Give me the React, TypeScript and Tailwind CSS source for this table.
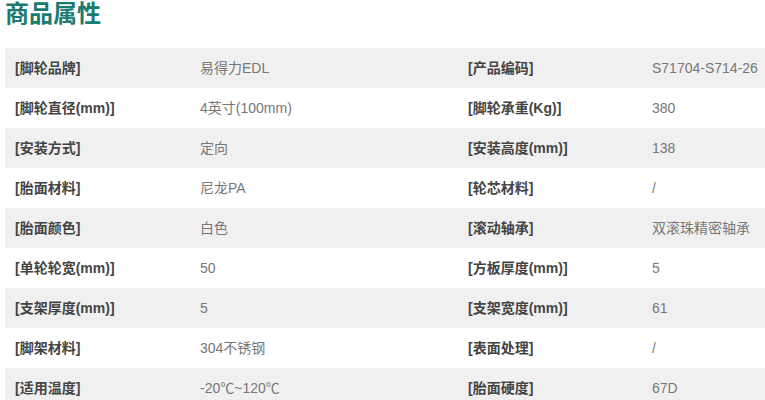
import React from "react";

const rows: [string, string, string, string][] = [
  ["[脚轮品牌]", "易得力EDL", "[产品编码]", "S71704-S714-26"],
  ["[脚轮直径(mm)]", "4英寸(100mm)", "[脚轮承重(Kg)]", "380"],
  ["[安装方式]", "定向", "[安装高度(mm)]", "138"],
  ["[胎面材料]", "尼龙PA", "[轮芯材料]", "/"],
  ["[胎面颜色]", "白色", "[滚动轴承]", "双滚珠精密轴承"],
  ["[单轮轮宽(mm)]", "50", "[方板厚度(mm)]", "5"],
  ["[支架厚度(mm)]", "5", "[支架宽度(mm)]", "61"],
  ["[脚架材料]", "304不锈钢", "[表面处理]", "/"],
  ["[适用温度]", "-20℃~120℃", "[胎面硬度]", "67D"],
];

export default function App() {
  return (
    <div
      className="w-[765px] h-[400px] overflow-hidden bg-white"
      style={{ fontFamily: '"Liberation Sans", "Noto Sans CJK SC", sans-serif' }}
    >
      <h1 className="pl-[5px] pt-0 h-[48px] text-[24px] leading-[28px] font-bold text-[#1b7a72]">
        商品属性
      </h1>
      <div className="ml-[5px]">
        {rows.map((r, i) => (
          <div
            key={i}
            className={`grid grid-cols-[185px_268px_184px_1fr] h-[40px] items-center text-[14px] ${
              i % 2 === 0 ? "bg-[#f0f0f0]" : "bg-white"
            }`}
          >
            <div className="pl-[10px] font-bold text-[#444]">{r[0]}</div>
            <div className="pl-[10px] text-[#777]">{r[1]}</div>
            <div className="pl-[10px] font-bold text-[#444]">{r[2]}</div>
            <div className="pl-[10px] text-[#777]">{r[3]}</div>
          </div>
        ))}
      </div>
    </div>
  );
}
